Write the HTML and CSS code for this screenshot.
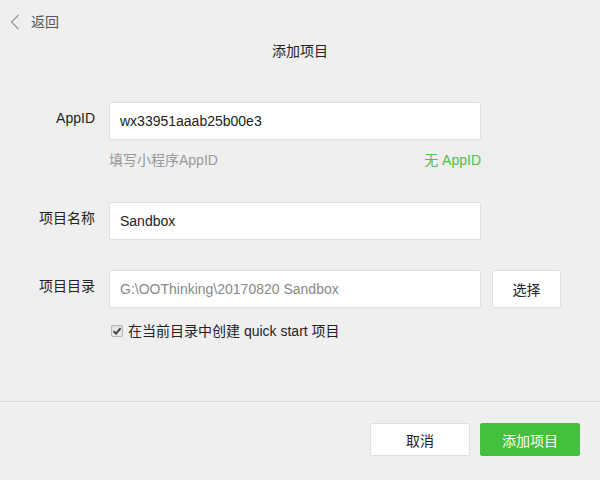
FILE: index.html
```html
<!DOCTYPE html>
<html lang="zh-CN">
<head>
  <meta charset="UTF-8">
  <title>添加项目</title>
  <link rel="stylesheet" href="styles.css">
</head>
<body>
  <div class="page">
    <div class="topbar">
      <a class="back" href="#">
        <svg width="10" height="16" viewBox="0 0 10 16"><path d="M8.5 1 L1.5 8 L8.5 15" fill="none" stroke="#9a9a9a" stroke-width="1.3"/></svg>
        <span>返回</span>
      </a>
    </div>
    <h1 class="title">添加项目</h1>

    <form class="form">
      <div class="row">
        <label class="label">AppID</label>
        <div class="field">
          <input class="input" type="text" value="wx33951aaab25b00e3">
          <div class="hint">
            <span>填写小程序AppID</span>
            <a class="link" href="#">无 AppID</a>
          </div>
        </div>
      </div>

      <div class="row row-name">
        <label class="label">项目名称</label>
        <div class="field">
          <input class="input" type="text" value="Sandbox">
        </div>
      </div>

      <div class="row row-dir">
        <label class="label">项目目录</label>
        <div class="field">
          <div class="dir">
            <input class="input input-dir" type="text" value="G:\OOThinking\20170820 Sandbox" readonly>
            <button type="button" class="btn btn-pick">选择</button>
          </div>
          <div class="check">
            <span class="box">
              <svg width="10" height="10" viewBox="0 0 10 10"><path d="M1.5 5.2 L4 7.6 L8.6 2.2" fill="none" stroke="#3a3a3a" stroke-width="1.8"/></svg>
            </span>
            <span>在当前目录中创建 quick start 项目</span>
          </div>
        </div>
      </div>
    </form>

    <div class="footer">
      <button type="button" class="btn btn-cancel">取消</button>
      <button type="button" class="btn btn-primary">添加项目</button>
    </div>
  </div>
</body>
</html>
```

FILE: styles.css
```css
html, body {
  margin: 0;
  padding: 0;
}
body {
  font-family: "Liberation Sans", "Noto Sans CJK SC", sans-serif;
  font-size: 14px;
  background-color: #efefef;
  color: #333;
}
.page {
  display: flex;
  flex-direction: column;
  height: 100vh;
}
.topbar {
  padding: 12px 0 0 10px;
  height: 20px;
}
.back {
  display: flex;
  align-items: center;
  gap: 11px;
  line-height: 20px;
  color: #555;
  text-decoration: none;
}
.title {
  margin: 9px 0 0;
  font-size: 14px;
  font-weight: normal;
  line-height: 20px;
  text-align: center;
  color: #222;
}
.form {
  flex: 1;
  padding-top: 41px;
}
.row {
  display: flex;
  gap: 14px;
}
.row-name {
  margin-top: 32px;
}
.row-dir {
  margin-top: 30px;
}
.label {
  width: 95px;
  padding-top: 6px;
  line-height: 20px;
  text-align: right;
  color: #222;
}
.field {
  width: 372px;
}
.input {
  display: block;
  width: 372px;
  height: 38px;
  padding: 0 10px;
  box-sizing: border-box;
  border: 1px solid #dedede;
  border-radius: 2px;
  background: #fff;
  font-family: inherit;
  font-size: 14px;
  color: #222;
  outline: none;
}
.hint {
  display: flex;
  justify-content: space-between;
  margin-top: 10px;
  line-height: 20px;
  color: #999;
}
.link {
  color: #4fbf45;
  text-decoration: none;
}
.dir {
  display: flex;
  gap: 11px;
}
.input-dir {
  flex: none;
  color: #888;
}
.btn {
  box-sizing: border-box;
  border: 1px solid #dedede;
  border-radius: 2px;
  background: #fff;
  font-family: inherit;
  font-size: 14px;
  color: #222;
  cursor: pointer;
}
.btn-pick {
  flex: none;
  width: 69px;
  height: 38px;
}
.check {
  display: flex;
  align-items: center;
  gap: 5px;
  margin-top: 13px;
  margin-left: 2px;
  line-height: 20px;
  color: #222;
}
.box {
  display: flex;
  align-items: center;
  justify-content: center;
  width: 12px;
  height: 12px;
  box-sizing: border-box;
  border: 1px solid #b5b5b5;
  border-radius: 2px;
  background: #e4e4e4;
}
.footer {
  display: flex;
  justify-content: flex-end;
  gap: 10px;
  padding: 21px 20px 24px;
  border-top: 1px solid #d9d9d9;
}
.btn-cancel, .btn-primary {
  width: 100px;
  height: 33px;
}
.btn-primary {
  border-color: #44c03e;
  background-color: #44c03e;
  color: #fff;
}
```
